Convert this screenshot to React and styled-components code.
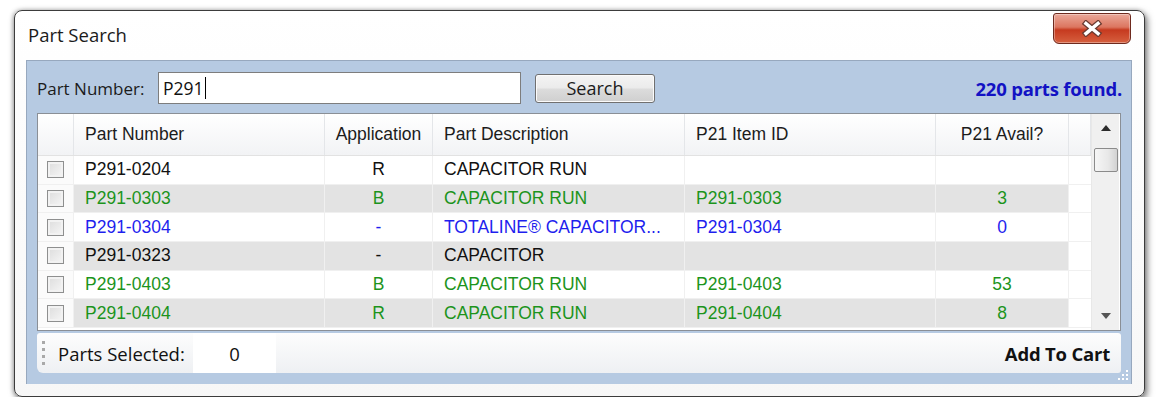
import React from 'react';
import styled, { createGlobalStyle } from 'styled-components';

const GlobalStyle = createGlobalStyle`
  body {
    margin: 0;
    background: #ffffff;
    font-family: "Open Sans", "Liberation Sans", sans-serif;
  }
`;

const COLS = '36px 251px 108px 252px 251px 133px 22px';

const Window = styled.div`
  box-sizing: border-box;
  width: 1131px;
  height: 387px;
  margin: 10px 0 0 14px;
  border: 1px solid #3c3c3c;
  border-radius: 8px;
  background: linear-gradient(#ffffff, #f7f7f7);
  box-shadow: 2px 3px 7px rgba(0, 0, 0, 0.55), -1px 0 4px rgba(0, 0, 0, 0.25);
  display: flex;
  flex-direction: column;
`;

const TitleBar = styled.div`
  height: 49px;
  display: flex;
  justify-content: space-between;
  align-items: flex-start;
`;

const Title = styled.div`
  padding: 11px 0 0 13px;
  font-size: 18.5px;
  line-height: 26px;
  color: #1b1b1b;
`;

const CloseButton = styled.div`
  box-sizing: border-box;
  width: 78px;
  height: 31px;
  margin: 2px 13px 0 0;
  border: 1px solid #6e2a1e;
  border-radius: 3px 3px 6px 6px;
  background: linear-gradient(#eaa899 0%, #dc7660 45%, #c63a1f 55%, #d6603f 100%);
  box-shadow: inset 0 0 0 1px rgba(255, 255, 255, 0.35);
  display: flex;
  align-items: center;
  justify-content: center;
`;

const Panel = styled.div`
  position: relative;
  flex: 1;
  margin: 0 12px 12px 11px;
  border: 1px solid #97a8be;
  border-bottom: none;
  background: #b6cae2;
  padding: 11px 10px 0 10px;
  display: flex;
  flex-direction: column;
`;

const SearchRow = styled.div`
  height: 32px;
  display: flex;
  align-items: center;
`;

const Label = styled.span`
  font-size: 17px;
  color: #1b1b1b;
  width: 121px;
`;

const SearchInput = styled.div`
  box-sizing: border-box;
  width: 363px;
  height: 32px;
  border: 1px solid #7d7d7d;
  background: #ffffff;
  padding: 0 4px;
  display: flex;
  align-items: center;
  font-size: 17.5px;
  color: #111;
`;

const Caret = styled.span`
  display: inline-block;
  width: 1px;
  height: 22px;
  margin-left: 1px;
  background: #000;
`;

const Button = styled.div`
  box-sizing: border-box;
  width: 120px;
  height: 29px;
  margin-left: 14px;
  border: 1px solid #707070;
  border-radius: 3px;
  background: linear-gradient(#f4f4f4 0%, #ebebeb 48%, #dcdcdc 52%, #cfcfcf 100%);
  box-shadow: inset 0 0 0 1px #fbfbfb;
  display: flex;
  align-items: center;
  justify-content: center;
  font-size: 18px;
  color: #1b1b1b;
`;

const Found = styled.span`
  margin-left: auto;
  margin-right: -1px;
  font-size: 18.5px;
  font-weight: 700;
  letter-spacing: -0.2px;
  color: #1212c4;
`;

const GridBox = styled.div`
  margin-top: 9px;
  height: 218px;
  box-sizing: border-box;
  border: 1px solid #8a8f96;
  background: #ffffff;
  display: flex;
`;

const Table = styled.div`
  width: 1053px;
  font-family: "Liberation Sans", Arial, sans-serif;
  font-size: 17.5px;
`;

const HeaderRow = styled.div`
  display: grid;
  grid-template-columns: ${COLS};
  height: 41px;
  border-bottom: 1px solid #e2e2e2;
`;

const HeadCell = styled.div`
  background: linear-gradient(#ffffff, #f2f3f5);
  border-right: 1px solid #e4e6e9;
  display: flex;
  align-items: center;
  justify-content: ${(p) => (p.$center ? 'center' : 'flex-start')};
  padding-left: ${(p) => (p.$center ? 0 : 11)}px;
  color: #1c1c1c;
  white-space: nowrap;
`;

const Row = styled.div`
  display: grid;
  grid-template-columns: ${COLS};
  height: 28.67px;
  color: ${(p) => p.$color};
`;

const Cell = styled.div`
  box-sizing: border-box;
  background: ${(p) => (p.$alt ? '#e3e3e3' : '#ffffff')};
  border-right: 1px solid #f0f0f0;
  border-bottom: 1px solid #f0f0f0;
  display: flex;
  align-items: center;
  justify-content: ${(p) => (p.$center ? 'center' : 'flex-start')};
  padding-left: ${(p) => (p.$center ? 0 : 11)}px;
  white-space: nowrap;
  overflow: hidden;
`;

const CheckCell = styled.div`
  box-sizing: border-box;
  background: #fbfbfb;
  border-right: 1px solid #f0f0f0;
  border-bottom: 1px solid #f0f0f0;
  display: flex;
  align-items: center;
  justify-content: center;
`;

const Check = styled.div`
  box-sizing: border-box;
  width: 17px;
  height: 17px;
  border: 1px solid #8e8f8f;
  background: linear-gradient(135deg, #dcdcdc, #f6f6f6);
  box-shadow: inset 0 0 0 2px #f2f2f2;
`;

const BlankCell = styled.div`
  background: #ffffff;
  border-bottom: 1px solid #f0f0f0;
`;

const Scrollbar = styled.div`
  width: 27px;
  background: #f0f0f0;
  border-left: 1px solid #e8e8e8;
  display: flex;
  flex-direction: column;
  align-items: center;
`;

const Arrow = styled.div`
  height: 28px;
  display: flex;
  align-items: center;
  justify-content: center;
  margin-top: ${(p) => (p.$down ? 'auto' : 0)};
`;

const Thumb = styled.div`
  box-sizing: border-box;
  width: 24px;
  height: 24px;
  margin-top: 6px;
  border: 1px solid #8b8b8b;
  border-radius: 2px;
  background: linear-gradient(90deg, #f6f6f6, #e8e8e8 60%, #d2d2d2);
`;

const StatusStrip = styled.div`
  margin-top: 2px;
  height: 40px;
  border-radius: 3px 3px 3px 6px;
  background: linear-gradient(#fdfdfd, #eef0f3);
  display: flex;
  align-items: stretch;
  font-size: 18.5px;
  color: #111;
`;

const Grip = styled.div`
  width: 21px;
  display: flex;
  flex-direction: column;
  justify-content: center;
  gap: 4px;
  padding-left: 5px;
  box-sizing: border-box;
  span {
    width: 3px;
    height: 3px;
    background: #a9a9a9;
  }
`;

const StatusLabel = styled.div`
  display: flex;
  align-items: center;
  width: 135px;
  white-space: nowrap;
`;

const CountBox = styled.div`
  width: 83px;
  background: #ffffff;
  display: flex;
  align-items: center;
  justify-content: center;
`;

const CartLink = styled.div`
  margin-left: auto;
  padding-right: 11px;
  display: flex;
  align-items: center;
  font-weight: 700;
  letter-spacing: -0.2px;
`;

const SizeGrip = styled.svg`
  position: absolute;
  right: 1px;
  bottom: 2px;
`;

const rows = [
  { num: 'P291-0204', app: 'R', desc: 'CAPACITOR RUN', item: '', avail: '', color: '#111111' },
  { num: 'P291-0303', app: 'B', desc: 'CAPACITOR RUN', item: 'P291-0303', avail: '3', color: '#1c941c' },
  { num: 'P291-0304', app: '-', desc: 'TOTALINE® CAPACITOR...', item: 'P291-0304', avail: '0', color: '#1f1fee' },
  { num: 'P291-0323', app: '-', desc: 'CAPACITOR', item: '', avail: '', color: '#111111' },
  { num: 'P291-0403', app: 'B', desc: 'CAPACITOR RUN', item: 'P291-0403', avail: '53', color: '#1c941c' },
  { num: 'P291-0404', app: 'R', desc: 'CAPACITOR RUN', item: 'P291-0404', avail: '8', color: '#1c941c' },
];

function CloseIcon() {
  return (
    <svg width="22" height="17" viewBox="0 0 22 17">
      <path d="M5 3.5 L17 13.5 M17 3.5 L5 13.5" stroke="#6a3a30" strokeWidth="6" strokeLinecap="square" />
      <path d="M5 3.5 L17 13.5 M17 3.5 L5 13.5" stroke="#ffffff" strokeWidth="3.5" strokeLinecap="square" />
    </svg>
  );
}

export default function App() {
  return (
    <>
      <GlobalStyle />
      <Window>
        <TitleBar>
          <Title>Part Search</Title>
          <CloseButton>
            <CloseIcon />
          </CloseButton>
        </TitleBar>
        <Panel>
          <SearchRow>
            <Label>Part Number:</Label>
            <SearchInput>
              P291
              <Caret />
            </SearchInput>
            <Button>Search</Button>
            <Found>220 parts found.</Found>
          </SearchRow>

          <GridBox>
            <Table>
              <HeaderRow>
                <HeadCell />
                <HeadCell>Part Number</HeadCell>
                <HeadCell $center>Application</HeadCell>
                <HeadCell>Part Description</HeadCell>
                <HeadCell>P21 Item ID</HeadCell>
                <HeadCell $center>P21 Avail?</HeadCell>
                <HeadCell />
              </HeaderRow>
              {rows.map((r, i) => {
                const alt = i % 2 === 1;
                return (
                  <Row key={r.num} $color={r.color}>
                    <CheckCell>
                      <Check />
                    </CheckCell>
                    <Cell $alt={alt}>{r.num}</Cell>
                    <Cell $alt={alt} $center>{r.app}</Cell>
                    <Cell $alt={alt}>{r.desc}</Cell>
                    <Cell $alt={alt}>{r.item}</Cell>
                    <Cell $alt={alt} $center>{r.avail}</Cell>
                    <BlankCell />
                  </Row>
                );
              })}
            </Table>
            <Scrollbar>
              <Arrow>
                <svg width="10" height="6" viewBox="0 0 10 6">
                  <path d="M0 6 L5 0 L10 6 Z" fill="#2b2b2b" />
                </svg>
              </Arrow>
              <Thumb />
              <Arrow $down>
                <svg width="10" height="6" viewBox="0 0 10 6">
                  <path d="M0 0 L5 6 L10 0 Z" fill="#555555" />
                </svg>
              </Arrow>
            </Scrollbar>
          </GridBox>

          <StatusStrip>
            <Grip>
              <span />
              <span />
              <span />
              <span />
            </Grip>
            <StatusLabel>Parts Selected:</StatusLabel>
            <CountBox>0</CountBox>
            <CartLink>Add To Cart</CartLink>
          </StatusStrip>

          <SizeGrip width="14" height="14" viewBox="0 0 14 14">
            {[
              [10, 2], [10, 6], [6, 6], [10, 10], [6, 10], [2, 10],
            ].map(([x, y]) => (
              <rect key={`${x}-${y}`} x={x} y={y} width="2" height="2" fill="#ffffff" />
            ))}
          </SizeGrip>
        </Panel>
      </Window>
    </>
  );
}
